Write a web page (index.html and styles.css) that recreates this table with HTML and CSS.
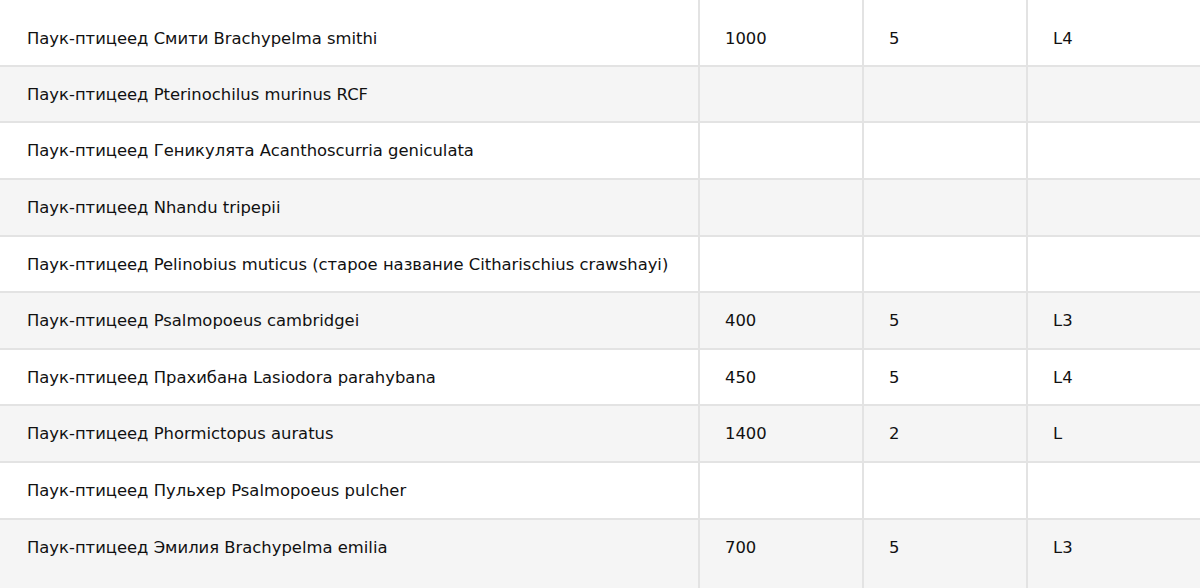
FILE: index.html
```html
<!DOCTYPE html>
<html lang="ru">
<head>
<meta charset="utf-8">
<link rel="stylesheet" href="styles.css">
</head>
<body>
<div class="wrap">
<table class="price">
<tbody>
<tr><td class="name">Паук-птицеед Смити Brachypelma smithi</td><td>1000</td><td>5</td><td>L4</td></tr>
<tr><td class="name">Паук-птицеед Pterinochilus murinus RCF</td><td></td><td></td><td></td></tr>
<tr><td class="name">Паук-птицеед Геникулята Acanthoscurria geniculata</td><td></td><td></td><td></td></tr>
<tr><td class="name">Паук-птицеед Nhandu tripepii</td><td></td><td></td><td></td></tr>
<tr><td class="name">Паук-птицеед Pelinobius muticus (старое название Citharischius crawshayi)</td><td></td><td></td><td></td></tr>
<tr><td class="name">Паук-птицеед Psalmopoeus cambridgei</td><td>400</td><td>5</td><td>L3</td></tr>
<tr><td class="name">Паук-птицеед Прахибана Lasiodora parahybana</td><td>450</td><td>5</td><td>L4</td></tr>
<tr><td class="name">Паук-птицеед Phormictopus auratus</td><td>1400</td><td>2</td><td>L</td></tr>
<tr><td class="name">Паук-птицеед Пульхер Psalmopoeus pulcher</td><td></td><td></td><td></td></tr>
<tr class="last"><td class="name">Паук-птицеед Эмилия Brachypelma emilia</td><td>700</td><td>5</td><td>L3</td></tr>
</tbody>
</table>
</div>
</body>
</html>
```

FILE: styles.css
```css
html, body {
  margin: 0;
  padding: 0;
  background: #fff;
}
.wrap {
  width: 1200px;
  height: 588px;
  overflow: hidden;
}
.price {
  width: 1204px;
  margin-left: -2px;
  border-collapse: collapse;
  table-layout: fixed;
  font-family: "DejaVu Sans", Verdana, sans-serif;
  font-size: 16.4px;
  color: #111;
}
.price td {
  border: 2px solid #e3e3e3;
  padding: 19px 25px 17px;
  line-height: 18.625px;
  vertical-align: middle;
  text-align: left;
  white-space: nowrap;
}
.price td.name { padding-left: 27px; }
.price td:nth-child(1) { width: 646px; }
.price td:nth-child(2) { width: 112px; }
.price td:nth-child(3) { width: 112px; }
.price tr:first-child td { border-top: none; padding-top: 30px; padding-bottom: 16px; }
.price tr:nth-child(even) td { background: #f5f5f5; }
.price tr.last td { border-bottom: none; padding-bottom: 40px; }
```
